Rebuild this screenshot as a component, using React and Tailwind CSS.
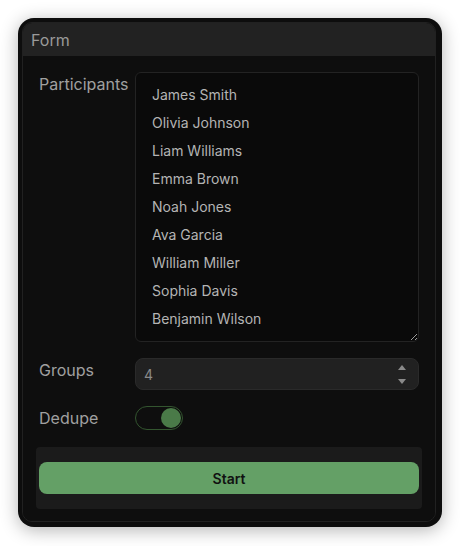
import React, { useState } from 'react';

const names = [
  'James Smith',
  'Olivia Johnson',
  'Liam Williams',
  'Emma Brown',
  'Noah Jones',
  'Ava Garcia',
  'William Miller',
  'Sophia Davis',
  'Benjamin Wilson',
];

const App = () => {
  const [participants, setParticipants] = useState(names.join('\n'));
  const [groups, setGroups] = useState('4');
  const [dedupe, setDedupe] = useState(true);

  return (
    <div className="min-h-screen bg-white p-[18px] font-['Inter','Liberation_Sans',Arial,sans-serif]">
      <div className="w-[424px] h-[509px] rounded-[16px] bg-[#0d0d0d] pt-1 pl-1 pr-[6px] pb-[5px] shadow-[0_3px_18px_rgba(0,0,0,0.3)]">
        <div className="h-full flex flex-col rounded-[10px] border border-[#212121] overflow-hidden">
          <div className="h-[33px] shrink-0 bg-[#222222] px-2 flex items-center text-[16px] text-[#9a9a9a]">
            Form
          </div>
          <div className="flex-1 flex flex-col gap-4 px-4 pt-4 bg-[#0e0e0e]">
            <div className="flex">
              <label className="w-24 shrink-0 text-[16px] leading-6 text-[#a0a0a0]">Participants</label>
              <textarea
                value={participants}
                onChange={(e) => setParticipants(e.target.value)}
                className="flex-1 h-[270px] rounded-md border border-[#232323] bg-[#0a0a0a] px-4 py-2 text-[14px] leading-[28px] text-[#b4b4b4] outline-none"
              />
            </div>

            <div className="flex">
              <label className="w-24 shrink-0 text-[16px] leading-6 text-[#a0a0a0]">Groups</label>
              <div className="flex-1 h-8 flex items-center rounded-lg border border-[#2a2a2a] bg-[#212121] pl-2 pr-3">
                <input
                  value={groups}
                  onChange={(e) => setGroups(e.target.value)}
                  className="flex-1 bg-transparent text-[14px] text-[#8a8a8a] outline-none"
                />
                <div className="flex flex-col items-center gap-[9px]">
                  <svg width="8" height="5" viewBox="0 0 8 5"><path d="M4 0L8 5H0z" fill="#8a8a8a" /></svg>
                  <svg width="8" height="5" viewBox="0 0 8 5"><path d="M0 0H8L4 5z" fill="#8a8a8a" /></svg>
                </div>
              </div>
            </div>

            <div className="flex">
              <label className="w-24 shrink-0 text-[16px] leading-6 text-[#a0a0a0]">Dedupe</label>
              <button
                onClick={() => setDedupe(!dedupe)}
                className={`w-12 h-6 rounded-full border flex items-center px-[1px] ${dedupe ? 'border-[#33552f] justify-end' : 'border-[#333] justify-start'}`}
              >
                <span className={`w-5 h-5 rounded-full ${dedupe ? 'bg-[#4a7a48]' : 'bg-[#555]'}`} />
              </button>
            </div>

            <div className="mt-[1px] -mx-[3px] rounded bg-[#1b1b1b] px-[3px] py-[15px]">
              <button className="w-full h-8 rounded-lg bg-[#64a066] text-[14px] font-semibold text-[#111]">
                Start
              </button>
            </div>
          </div>
        </div>
      </div>
    </div>
  );
};

export default App;
